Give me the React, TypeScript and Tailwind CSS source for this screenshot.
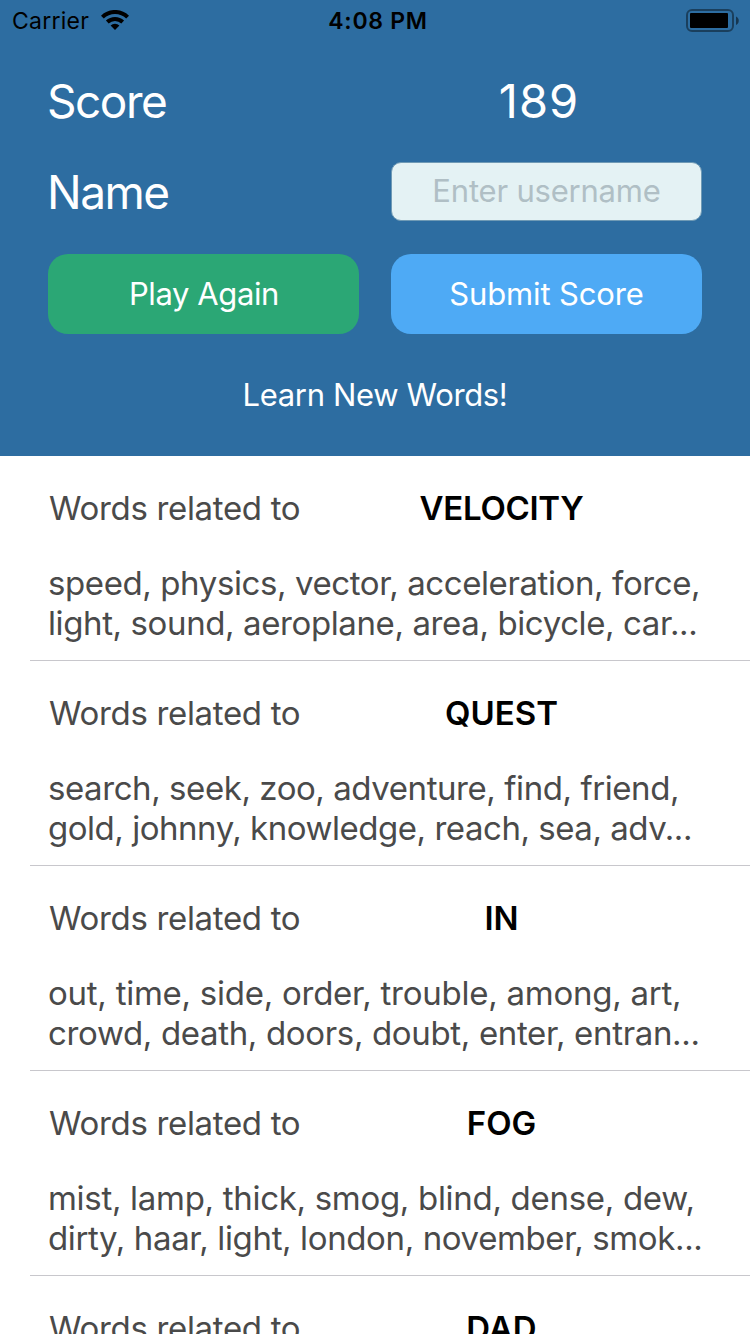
import React from "react";

type Entry = {
  word: string;
  wordSpacing: string;
  lines: { text: string; spacing: string }[];
};

const entries: Entry[] = [
  {
    word: "VELOCITY",
    wordSpacing: "tracking-[-0.3px]",
    lines: [
      { text: "speed, physics, vector, acceleration, force,", spacing: "tracking-[-0.4px]" },
      { text: "light, sound, aeroplane, area, bicycle, car...", spacing: "tracking-[-0.39px]" },
    ],
  },
  {
    word: "QUEST",
    wordSpacing: "tracking-[0px]",
    lines: [
      { text: "search, seek, zoo, adventure, find, friend,", spacing: "tracking-[-0.43px]" },
      { text: "gold, johnny, knowledge, reach, sea, adv...", spacing: "tracking-[-0.47px]" },
    ],
  },
  {
    word: "IN",
    wordSpacing: "tracking-[0px]",
    lines: [
      { text: "out, time, side, order, trouble, among, art,", spacing: "tracking-[-0.25px]" },
      { text: "crowd, death, doors, doubt, enter, entran...", spacing: "tracking-[-0.34px]" },
    ],
  },
  {
    word: "FOG",
    wordSpacing: "tracking-[0px]",
    lines: [
      { text: "mist, lamp, thick, smog, blind, dense, dew,", spacing: "tracking-[-0.3px]" },
      { text: "dirty, haar, light, london, november, smok...", spacing: "tracking-[-0.37px]" },
    ],
  },
  { word: "DAD", wordSpacing: "tracking-[0px]", lines: [] },
];

function WifiIcon() {
  return (
    <svg className="-mt-[2px]" width="28" height="20" viewBox="0 0 28 20" fill="none" stroke="black" strokeWidth="4">
      <path d="M1.4 7.1 A18 18 0 0 1 26.6 7.1" />
      <path d="M6.3 12 A11.2 11.2 0 0 1 21.7 12" />
      <path d="M9.6 15.4 A6.6 6.6 0 0 1 18.4 15.4 L14 20 Z" fill="black" stroke="none" />
    </svg>
  );
}

function BatteryIcon() {
  return (
    <svg width="54" height="24" viewBox="0 0 54 24">
      <rect x="1" y="1" width="46" height="21" rx="5" fill="none" stroke="black" strokeOpacity="0.42" strokeWidth="2" />
      <rect x="4" y="4" width="38" height="15" rx="1" fill="black" />
      <path d="M50 7.5 C53.7 9 53.7 14.5 50 16 Z" fill="black" fillOpacity="0.5" />
    </svg>
  );
}

function StatusBar() {
  return (
    <div className="flex h-10 items-center justify-between pl-[12px] pr-[10px] pt-[2px] text-black">
      <div className="flex w-[300px] items-center gap-[12px]">
        <span className="text-[23px] tracking-[0.25px]">Carrier</span>
        <WifiIcon />
      </div>
      <span className="text-[23px] font-semibold tracking-[0.7px]">4:08 PM</span>
      <div className="flex w-[296px] justify-end">
        <BatteryIcon />
      </div>
    </div>
  );
}

export default function App() {
  return (
    <div className="flex h-[1334px] w-[750px] flex-col overflow-hidden bg-white font-[Inter,sans-serif]">
      <header className="flex h-[456px] shrink-0 flex-col bg-[#2d6da1] text-white">
        <StatusBar />
        <div className="mt-[29px] flex h-16 items-center px-12 text-[46px]">
          <span className="-ml-px w-[344px] tracking-[-1.5px]">Score</span>
          <span className="w-[296px] text-center text-[47px] tracking-[1px]">189</span>
        </div>
        <div className="mt-[29px] flex h-[60px] items-center px-12 text-[46px]">
          <span className="-ml-px w-[344px] tracking-[-1.5px]">Name</span>
          <input
            aria-label="Name"
            placeholder="Enter username"
            className="-mt-px h-[59px] w-[311px] rounded-[10px] border border-[#6f9ab5] bg-[#e4f2f4] pb-[2px] text-center text-[31px] tracking-[-0.2px] outline-none placeholder:text-[#b0bfc5] placeholder:opacity-100"
          />
        </div>
        <div className="mt-8 grid h-20 grid-cols-2 gap-8 px-12 text-[31px]">
          <button className="rounded-[20px] bg-[#2ba775] pl-px tracking-[-0.4px]">Play Again</button>
          <button className="rounded-[20px] bg-[#4eaaf5] tracking-[-0.15px]">Submit Score</button>
        </div>
        <p className="mt-[38px] text-center text-[31px] tracking-[-0.35px]">Learn New Words!</p>
      </header>
      <main>
        {entries.map((entry) => (
          <section key={entry.word} className="flex h-[205px] flex-col pl-[30px]">
            <div className="flex-1 border-b border-[#c8c7cc] pl-[18px] pt-[32px] text-[33px] leading-[40px] text-[#4a4a4a]">
              <div className="flex">
                <span className="w-[308px] pl-px tracking-[-0.33px]">Words related to</span>
                <span className={`w-[291px] text-center font-semibold text-black ${entry.wordSpacing}`}>
                  {entry.word}
                </span>
              </div>
              <div className="mt-[35px] whitespace-nowrap">
                {entry.lines.map((line) => (
                  <p key={line.text} className={line.spacing}>
                    {line.text}
                  </p>
                ))}
              </div>
            </div>
          </section>
        ))}
      </main>
    </div>
  );
}
